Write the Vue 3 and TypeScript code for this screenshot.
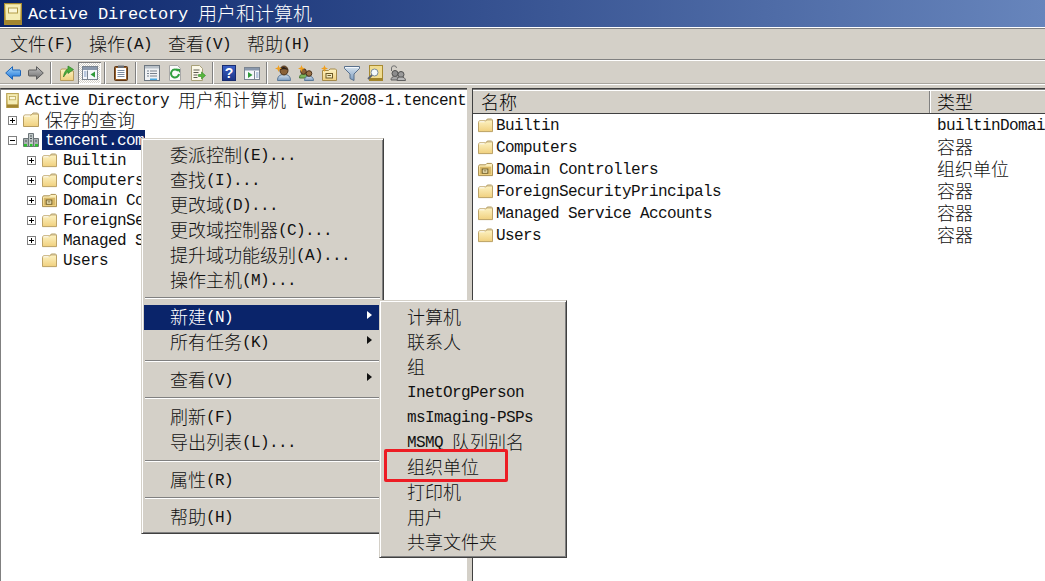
<script setup lang="ts">
import { h } from 'vue'

function T(props: { t: string }) {
  const parts = props.t.split(/([\u3000-\u9fff]+)/).filter(Boolean)
  return parts.map((p) =>
    h('span', { class: /[\u3000-\u9fff]/.test(p) ? 'cjk' : 'lat' }, p)
  )
}
T.props = ['t']

type Tool = { icon?: string; active?: boolean; sep?: boolean }
const tools: Tool[] = [
  { icon: 'back' }, { icon: 'forward' }, { sep: true },
  { icon: 'up' }, { icon: 'tree', active: true }, { sep: true },
  { icon: 'clip' }, { sep: true },
  { icon: 'props' }, { icon: 'refresh' }, { icon: 'export' }, { sep: true },
  { icon: 'help' }, { icon: 'console' }, { sep: true },
  { icon: 'newuser' }, { icon: 'newgroup' }, { icon: 'newou' }, { icon: 'filter' }, { icon: 'find' }, { icon: 'connect' }
]
const menus = ['文件(F)', '操作(A)', '查看(V)', '帮助(H)']
const treeKids = [
  { t: 'Builtin', i: 'folder', plus: true },
  { t: 'Computers', i: 'folder', plus: true },
  { t: 'Domain Controllers', i: 'ou', plus: true },
  { t: 'ForeignSecurityPrincipals', i: 'folder', plus: true },
  { t: 'Managed Service Accounts', i: 'folder', plus: true },
  { t: 'Users', i: 'folder', plus: false }
]
const rows = [
  { t: 'Builtin', i: 'folder', k: 'builtinDomain' },
  { t: 'Computers', i: 'folder', k: '容器' },
  { t: 'Domain Controllers', i: 'ou', k: '组织单位' },
  { t: 'ForeignSecurityPrincipals', i: 'folder', k: '容器' },
  { t: 'Managed Service Accounts', i: 'folder', k: '容器' },
  { t: 'Users', i: 'folder', k: '容器' }
]
type Item = { t?: string; sep?: boolean; sub?: boolean; sel?: boolean }
const ctx: Item[] = [
  { t: '委派控制(E)...' }, { t: '查找(I)...' }, { t: '更改域(D)...' }, { t: '更改域控制器(C)...' },
  { t: '提升域功能级别(A)...' }, { t: '操作主机(M)...' }, { sep: true },
  { t: '新建(N)', sub: true, sel: true }, { t: '所有任务(K)', sub: true }, { sep: true },
  { t: '查看(V)', sub: true }, { sep: true },
  { t: '刷新(F)' }, { t: '导出列表(L)...' }, { sep: true },
  { t: '属性(R)' }, { sep: true }, { t: '帮助(H)' }
]
const sub = ['计算机', '联系人', '组', 'InetOrgPerson', 'msImaging-PSPs', 'MSMQ 队列别名', '组织单位', '打印机', '用户', '共享文件夹']
</script>

<template>
  <div class="app">
    <svg class="defs" width="0" height="0" aria-hidden="true">
      <defs>
        <linearGradient id="gF" x1="0" y1="0" x2="0" y2="1"><stop offset="0" stop-color="#fdf3c4"/><stop offset="1" stop-color="#f0d07e"/></linearGradient>
        <linearGradient id="gB" x1="0" y1="0" x2="0" y2="1"><stop offset="0" stop-color="#a8d8f8"/><stop offset="1" stop-color="#1670d8"/></linearGradient>
        <linearGradient id="gG" x1="0" y1="0" x2="0" y2="1"><stop offset="0" stop-color="#c4c4c4"/><stop offset="1" stop-color="#6c6c6c"/></linearGradient>
        <linearGradient id="gM" x1="0" y1="0" x2="0" y2="1"><stop offset="0" stop-color="#e8d890"/><stop offset="1" stop-color="#b89a3c"/></linearGradient>
        <linearGradient id="gH" x1="0" y1="0" x2="0" y2="1"><stop offset="0" stop-color="#3c62c8"/><stop offset="1" stop-color="#1c3484"/></linearGradient>
        <linearGradient id="gS" x1="0" y1="0" x2="0" y2="1"><stop offset="0" stop-color="#d8e4ee"/><stop offset="1" stop-color="#7c9cc0"/></linearGradient>
        <symbol id="folder" viewBox="0 0 16 16">
          <path d="M8.5 3.5 10 1h4.5l1 1.2V6h-7z" fill="#fff" stroke="#b9a56e"/>
          <path d="M.5 4.500 1.500 3H8l1.500-1h5l1 1v11.500H.5z" fill="url(#gF)" stroke="#b79c5e"/>
          <path d="M1.500 4h5.500" stroke="#fff" fill="none"/>
        </symbol>
        <symbol id="ou" viewBox="0 0 16 16">
          <path d="M.5 4.5 1.5 3H8l1.5-1.5h5l1 1v12H.5z" fill="url(#gF)" stroke="#a58a4a"/>
          <rect x="2" y="5" width="12" height="8" fill="#d8b868"/>
          <rect x="4.5" y="7.5" width="6" height="4.5" fill="#f6ecc0" stroke="#6c5a26"/>
          <path d="M6 9.5h3" stroke="#6c5a26"/>
        </symbol>
        <symbol id="mmc" viewBox="0 0 18 22">
          <rect x=".5" y=".5" width="17" height="21" fill="url(#gM)" stroke="#a58a30"/>
          <rect x="2" y="2" width="14" height="15" fill="#f4ecb4"/>
          <rect x="4.5" y="5" width="9" height="5" fill="#fbf6d6" stroke="#b29c48"/>
          <rect x="1" y="17" width="16" height="4" fill="#a38630"/>
        </symbol>
        <symbol id="domain" viewBox="0 0 16 16">
          <path d="M5.5 1.5h5v13h-5z" fill="#c0c8c8" stroke="#6c7478"/>
          <path d="M.5 6.5h5v8h-5zM10.5 6.5h5v8h-5z" fill="#a8b0b0" stroke="#6c7478"/>
          <path d="M7 4h2M7 6.5h2M7 9h2M2 9h2M12 9h2" stroke="#4c5458"/>
          <rect x="1" y="12" width="3" height="2.5" fill="#30c030"/>
          <rect x="7" y="12" width="2.5" height="2.5" fill="#30c030"/>
          <rect x="12" y="12" width="3" height="2.5" fill="#30c030"/>
        </symbol>
        <symbol id="back" viewBox="0 0 16 16"><path d="M.7 8 7.500 1.700V5H14.800Q15.500 5 15.500 6V10Q15.500 11 14.800 11H7.500V14.300Z" fill="url(#gB)" stroke="#1c64b8"/></symbol>
        <symbol id="forward" viewBox="0 0 16 16"><path d="M15.300 8 8.500 1.700V5H1.200Q.5 5 .5 6V10Q.5 11 1.200 11H8.500V14.300Z" fill="url(#gG)" stroke="#5c5c5c"/></symbol>
        <symbol id="up" viewBox="0 0 16 16">
          <path d="M1.500 5.500 2.500 4h5v2h7v9.500h-13z" fill="url(#gF)" stroke="#b79c5e"/>
          <path d="M4.500 12C5 7.500 7 4.500 9 4V1L14.500 4.500 9 8.500V6.500C7.500 7.500 6 10 4.500 12Z" fill="#4cae3c" stroke="#2d7f25" stroke-width=".7"/>
        </symbol>
        <symbol id="tree" viewBox="0 0 16 16">
          <rect x=".5" y="1.500" width="15" height="13" fill="#f6f8fc" stroke="#7a8490"/>
          <rect x="1" y="2" width="14" height="3" fill="#8a98ac"/>
          <path d="M5.500 5.500v9" stroke="#7a8490"/>
          <path d="M2 7h2.500M2 9h2.500M2 11h2.500" stroke="#7a96c0"/>
          <path d="M13 6.500v6L8.500 9.500z" fill="#2f9a3a"/>
        </symbol>
        <symbol id="clip" viewBox="0 0 16 16">
          <rect x="1.500" y="1.500" width="13" height="14" rx="1" fill="#96602c" stroke="#5c3616"/>
          <rect x="3" y="3" width="10" height="11" fill="#fff"/>
          <path d="M4.500 5.500h7M4.500 7.500h7M4.500 9.500h7M4.500 11.500h7" stroke="#7c8ca0"/>
          <rect x="5" y=".5" width="6" height="2.500" fill="#6a7078"/>
        </symbol>
        <symbol id="props" viewBox="0 0 16 16">
          <rect x=".5" y=".5" width="15" height="15" fill="#f0f2f4" stroke="#6c7680"/>
          <rect x="1" y="1" width="14" height="2.500" fill="#b8c0c8"/>
          <path d="M3 6h2M6 6h7M3 8.500h2M6 8.500h7M3 11h2M6 11h7" stroke="#76808c"/>
          <rect x="6" y="13.500" width="7" height="1.500" fill="#48a8e0"/>
        </symbol>
        <symbol id="refresh" viewBox="0 0 16 16">
          <path d="M2.500 .5h8l3 3v12h-11z" fill="#fbfbfb" stroke="#a8a8a8"/>
          <path d="M11 5.800A4 4 0 1 0 12 9" fill="none" stroke="#30a040" stroke-width="2"/>
          <path d="M9 3.500 13 4v4z" fill="#30a040"/>
        </symbol>
        <symbol id="export" viewBox="0 0 16 16">
          <path d="M1.500 .5h8l3 3v12h-11z" fill="#fbf8e8" stroke="#a8a078"/>
          <path d="M3.500 5h6M3.500 7.500h5M3.500 10h4M3.500 12.500h4" stroke="#5c5c50"/>
          <path d="M8.500 9.500h3V7l4 3.500-4 3.500v-2.500h-3z" fill="#58b83c" stroke="#2e8a26" stroke-width=".6"/>
        </symbol>
        <symbol id="help" viewBox="0 0 16 16">
          <rect x="1.500" y=".5" width="13" height="15" fill="url(#gH)" stroke="#182c70"/>
          <text x="8" y="13" text-anchor="middle" font-family="Liberation Sans" font-weight="700" font-size="14" fill="#fff">?</text>
        </symbol>
        <symbol id="console" viewBox="0 0 16 16">
          <rect x=".5" y="2.500" width="15" height="12" fill="#f6f8fc" stroke="#7a8490"/>
          <rect x="1" y="3" width="14" height="2.500" fill="#8a98ac"/>
          <path d="M10.500 6v8" stroke="#7a8490"/>
          <path d="M12 8h2.500M12 10h2.500M12 12h2.500" stroke="#7a96c0"/>
          <path d="M4 7v6l4.500-3z" fill="#2f9a3a"/>
        </symbol>
        <symbol id="newuser" viewBox="0 0 16 16">
          <path d="M2.500 15.500c0-4 2-6 6.500-6s6.500 2 6.500 6z" fill="url(#gS)" stroke="#5a7898"/>
          <ellipse cx="9" cy="5.500" rx="4" ry="4.500" fill="#8a6238" stroke="#4a3018"/>
          <path d="M5 5c1-4 6-4 8 0-2-1-6-1-8 0z" fill="#2c2018"/>
          <path d="M3.500 0 4.400 2.600 7 3.500 4.400 4.400 3.500 7 2.600 4.400 0 3.500 2.600 2.600Z" fill="#f0a020"/>
        </symbol>
        <symbol id="newgroup" viewBox="0 0 16 16">
          <path d="M1.500 13c0-3 1.500-4 4-4s4 1 4 4z" fill="#7cb45c" stroke="#4c7c38"/>
          <circle cx="5.500" cy="6.500" r="2.800" fill="#8a6238" stroke="#4a3018"/>
          <path d="M6.500 15.500c0-3 2-4.500 4.500-4.500s4.500 1.500 4.500 4.500z" fill="url(#gS)" stroke="#5a7898"/>
          <circle cx="11" cy="8.500" r="2.800" fill="#9a7248" stroke="#4a3018"/>
          <path d="M3.500 0 4.400 2.600 7 3.500 4.400 4.400 3.500 7 2.600 4.400 0 3.500 2.600 2.600Z" fill="#f0a020"/>
        </symbol>
        <symbol id="newou" viewBox="0 0 16 16">
          <path d="M1.500 5.500h6L9 4h5.500l1 1v10.500h-14z" fill="url(#gF)" stroke="#a58a4a"/>
          <rect x="5" y="8.500" width="6.500" height="4.500" fill="#f6ecc0" stroke="#6c5a26"/>
          <path d="M6.500 10.500h3.500" stroke="#6c5a26"/>
          <path d="M3.500 0 4.400 2.600 7 3.500 4.400 4.400 3.500 7 2.600 4.400 0 3.500 2.600 2.600Z" fill="#f0a020"/>
        </symbol>
        <symbol id="filter" viewBox="0 0 16 16">
          <path d="M.5 1.500h15v2L10 9v6.500L6 13.500V9L.5 3.500z" fill="url(#gS)" stroke="#58708c"/>
          <path d="M1 2.500h14" stroke="#f4f8fc"/>
        </symbol>
        <symbol id="find" viewBox="0 0 16 16">
          <rect x="2.500" y=".5" width="13" height="15" fill="#f0dc90" stroke="#a88a30"/>
          <rect x="2.500" y="13" width="13" height="2.500" fill="#a08428"/>
          <circle cx="7.500" cy="7.500" r="3.500" fill="#f4fafc" stroke="#7c8c98"/>
          <path d="M5 10 1 14" stroke="#5c6470" stroke-width="1.800"/>
        </symbol>
        <symbol id="connect" viewBox="0 0 16 16">
          <path d="M1.500 6V3Q1.500 .8 4 .8T6.500 3" fill="none" stroke="#707070"/>
          <circle cx="5" cy="8.500" r="3" fill="#8c8c8c" stroke="#505050"/>
          <path d="M1 15c0-2.500 1.500-3.500 4-3.500s4 1 4 3.500z" fill="#a8a8a8" stroke="#606060"/>
          <circle cx="11" cy="9.500" r="3" fill="#9a9a9a" stroke="#505050"/>
          <path d="M7 15.500c0-2.500 1.500-3.500 4-3.500s4.500 1 4.500 3.500z" fill="#b8b8b8" stroke="#606060"/>
        </symbol>
      </defs>
    </svg>

    <header class="title">
      <svg class="title-ic"><use href="#mmc"/></svg>
      <span class="ttext"><T t="Active Directory 用户和计算机"/></span>
    </header>
    <nav class="menubar">
      <span v-for="m in menus" :key="m" class="menu"><T :t="m"/></span>
    </nav>
    <div class="toolbar">
      <template v-for="(b, i) in tools" :key="i">
        <span v-if="b.sep" class="tsep"></span>
        <span v-else class="tbtn" :class="{ on: b.active }"><svg class="ic"><use :href="'#' + b.icon"/></svg></span>
      </template>
    </div>

    <main class="body">
      <section class="tree">
        <div class="node root">
          <svg class="root-ic"><use href="#mmc"/></svg>
          <span class="nt"><T t="Active Directory 用户和计算机 [win-2008-1.tencent.com]"/></span>
        </div>
        <div class="node l1">
          <span class="exp plus"></span>
          <svg class="ic"><use href="#folder"/></svg>
          <span class="nt lab"><T t="保存的查询"/></span>
        </div>
        <div class="node l1">
          <span class="exp"></span>
          <svg class="ic"><use href="#domain"/></svg>
          <span class="nt lab sel"><T t="tencent.com"/></span>
        </div>
        <div v-for="k in treeKids" :key="k.t" class="node l2">
          <span class="exp" :class="k.plus ? 'plus' : 'none'"></span>
          <svg class="ic fic"><use :href="'#' + k.i"/></svg>
          <span class="nt kid"><T :t="k.t"/></span>
        </div>
      </section>
      <section class="list">
        <div class="lhead">
          <div class="lh c1"><T t="名称"/></div>
          <div class="lh c2"><T t="类型"/></div>
        </div>
        <div v-for="r in rows" :key="r.t" class="lrow">
          <div class="c1 cell">
            <svg class="ic fic"><use :href="'#' + r.i"/></svg>
            <T :t="r.t"/>
          </div>
          <div class="c2 cell"><T :t="r.k"/></div>
        </div>
      </section>
    </main>

    <div class="pop ctx">
      <template v-for="(it, i) in ctx" :key="i">
        <div v-if="it.sep" class="msep"></div>
        <div v-else class="mi" :class="{ sel: it.sel }">
          <T :t="it.t || ''"/>
          <i v-if="it.sub" class="arrow"></i>
        </div>
      </template>
    </div>
    <div class="pop subm">
      <div v-for="s in sub" :key="s" class="mi"><T :t="s"/></div>
    </div>
    <div class="mark"></div>
  </div>
</template>

<style>
.cjk, .lat { display: inline-block; line-height: 20px; vertical-align: top; white-space: pre; position: relative; }
.cjk { font-family: "Noto Sans CJK SC", sans-serif; font-size: 18px; font-weight: 300; top: -1px; }
.lat { font-family: "Liberation Mono", monospace; font-size: 16px; letter-spacing: -0.6px; top: 1px; }
.ttext .cjk { font-size: 19px; }
.ttext .lat { font-size: 17px; letter-spacing: -0.2px; }
</style>

<style scoped>
.app {
  position: relative;
  width: 1045px;
  height: 581px;
  overflow: hidden;
  display: flex;
  flex-direction: column;
  background: #d4d0c8;
  color: #000;
  font-family: "Liberation Mono", monospace;
}
.defs { position: absolute; }
.title {
  height: 27px;
  flex: none;
  display: flex;
  align-items: center;
  padding-left: 4px;
  color: #fff;
  background: linear-gradient(90deg, #0a246a, #6785bc);
  box-sizing: border-box;
  box-shadow: 0 1px 0 #fff, 0 2px 0 #808080;
  position: relative;
}
.title-ic { width: 18px; height: 22px; margin-right: 6px; }
.ttext { white-space: nowrap; }
.menubar {
  flex: none;
  height: 31px;
  margin-top: 2px;
  box-sizing: border-box;
  padding: 0 0 0 2px;
  display: flex;
  align-items: center;
  border-bottom: 1px solid #808080;
}
.menu { padding: 0 8px; white-space: nowrap; color: #111; }
.toolbar {
  flex: none;
  height: 25px;
  box-sizing: border-box;
  border-top: 1px solid #fff;
  border-bottom: 1px solid #fff;
  padding-left: 1px;
  display: flex;
  align-items: center;
  box-shadow: inset 0 -1px 0 #a8a59e;
}
.tbtn {
  width: 23px;
  height: 22px;
  flex: none;
  display: flex;
  align-items: center;
  justify-content: center;
  box-sizing: border-box;
}
.tbtn.on {
  background: repeating-conic-gradient(#fff 0 25%, #d4d0c8 0 50%) 0 0 / 2px 2px;
  box-shadow: inset 1px 1px 0 #808080, inset -1px -1px 0 #fff;
}
.tsep {
  width: 8px;
  height: 22px;
  flex: none;
  box-sizing: border-box;
  border-left: 3px solid transparent;
  border-right: 3px solid transparent;
  background: linear-gradient(90deg, #808080 50%, #fff 50%) content-box;
}
.ic { width: 16px; height: 16px; flex: none; display: block; }
.body {
  flex: none;
  margin-top: 3px;
  height: 493px;
  display: flex;
  gap: 5px;
}
.tree {
  width: 467px;
  flex: none;
  box-sizing: border-box;
  background: #fff;
  border-top: 1px solid #404040;
  border-left: 1px solid #808080;
  box-shadow: inset 0 1px 0 #808080;
  padding-top: 1px;
  overflow: hidden;
}
.node {
  height: 20px;
  display: flex;
  align-items: center;
  white-space: nowrap;
  color: #111;
}
.root { padding-left: 5px; }
.root-ic { width: 13px; height: 15px; flex: none; margin-right: 6px; }
.l1 { padding-left: 7px; }
.l2 { padding-left: 26px; }
.exp {
  width: 9px;
  height: 9px;
  flex: none;
  box-sizing: border-box;
  border: 1px solid #808080;
  margin-right: 6px;
  background:
    linear-gradient(#000, #000) center / 5px 1px no-repeat, #fff;
}
.exp.plus {
  background:
    linear-gradient(#000, #000) center / 5px 1px no-repeat,
    linear-gradient(#000, #000) center / 1px 5px no-repeat, #fff;
}
.exp.none { visibility: hidden; }
.lab { margin-left: 3px; padding: 0 1px 0 3px; height: 20px; display: flex; align-items: center; }
.sel { background: #0a246a; color: #fff; }
.fic { width: 15px; height: 15px; }
.kid { margin-left: 6px; }
.list {
  flex: 1;
  min-width: 0;
  background: #fff;
  border-top: 1px solid #404040;
  border-left: 1px solid #404040;
  box-shadow: inset 0 1px 0 #808080;
  overflow: hidden;
}
.lhead {
  height: 24px;
  margin-top: 1px;
  display: flex;
  background: #d4d0c8;
  border-top: 1px solid #fff;
  border-bottom: 1px solid #404040;
  box-sizing: border-box;
}
.lh { display: flex; align-items: center; }
.c1 { width: 457px; flex: none; box-sizing: border-box; padding-left: 8px; white-space: nowrap; }
.c2 { flex: 1; padding-left: 6px; white-space: nowrap; overflow: hidden; }
.lh.c1 { border-right: 1px solid #808080; }
.lh.c2 { border-left: 1px solid #fff; }
.lrow { display: flex; height: 22px; color: #111; }
.lrow .c1 { padding-left: 5px; }
.lrow .c2 { padding-left: 7px; }
.cell { display: flex; align-items: center; }
.cell .fic { margin-right: 3px; }
.pop {
  position: absolute;
  box-sizing: border-box;
  background: #d4d0c8;
  border: 1px solid;
  border-color: #d4d0c8 #404040 #404040 #d4d0c8;
  box-shadow: inset 1px 1px 0 #fff, inset -1px -1px 0 #808080;
  color: #111;
}
.ctx { left: 141px; top: 138px; width: 243px; height: 396px; padding: 3px 2px; }
.subm { left: 379px; top: 300px; width: 188px; height: 258px; padding: 3px 2px; }
.mi {
  height: 25px;
  display: flex;
  align-items: center;
  padding-left: 26px;
  position: relative;
  white-space: nowrap;
}
.subm .mi { padding-left: 25px; }
.mi.sel { background: #0a246a; color: #fff; }
.msep {
  height: 12.6px;
  box-sizing: border-box;
  padding: 5px 0 0;
  margin: 0 1px;
  background: linear-gradient(#808080, #808080) 0 5px / 100% 1px no-repeat, linear-gradient(#fff, #fff) 0 6px / 100% 1px no-repeat;
}
.arrow {
  position: absolute;
  right: 9px;
  top: 6px;
  width: 0;
  height: 0;
  border-style: solid;
  border-width: 4.5px 0 4.5px 5px;
  border-color: transparent transparent transparent currentColor;
}
.mark {
  position: absolute;
  left: 384px;
  top: 449px;
  width: 124px;
  height: 33px;
  box-sizing: border-box;
  border: 3px solid #ed1c24;
  border-radius: 2px;
}
</style>
